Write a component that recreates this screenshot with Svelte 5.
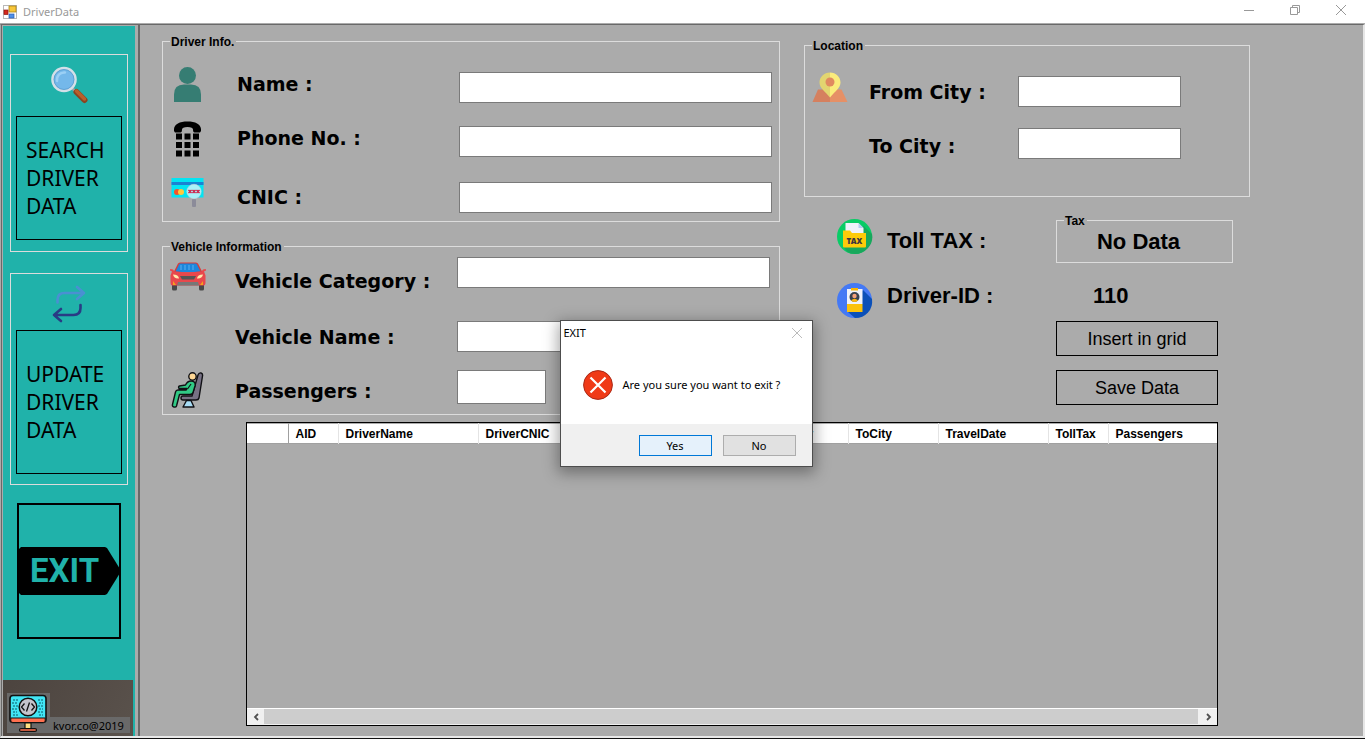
<script>
  const columns = [
    { title: '', width: 41 },
    { title: 'AID', width: 50 },
    { title: 'DriverName', width: 140 },
    { title: 'DriverCNIC', width: 275 },
    { title: 'FromCity', width: 95 },
    { title: 'ToCity', width: 90 },
    { title: 'TravelDate', width: 110 },
    { title: 'TollTax', width: 60 },
    { title: 'Passengers', width: 109 }
  ];
  const total = columns.reduce((sum, c) => sum + c.width, 0);
</script>

<div class="window">
  <header class="titlebar">
    <svg class="app-icon" viewBox="0 0 14 14" width="14" height="14" aria-hidden="true">
      <rect x=".5" y=".5" width="13" height="13" fill="#fff" stroke="#b9b9b9" />
      <rect x="6" y="1" width="7" height="6" fill="#f8c63a" stroke="#a88216" stroke-width=".8" />
      <rect x="1" y="5" width="4" height="4.5" fill="#d4281e" stroke="#8f1510" stroke-width=".7" />
      <rect x="6" y="9" width="5" height="4" fill="#4f8fe8" stroke="#2a5db0" stroke-width=".7" />
    </svg>
    <span class="title">DriverData</span>
    <div class="controls">
      <button aria-label="Minimize"><svg width="12" height="12" viewBox="0 0 12 12"><path d="M1 6.500h10" stroke="#999" fill="none" /></svg></button>
      <button aria-label="Restore"><svg width="12" height="12" viewBox="0 0 12 12"><path d="M1.500 3.500h7v7h-7zM3.500 3.500v-2h7v7h-2" stroke="#999" fill="none" /></svg></button>
      <button aria-label="Close"><svg width="12" height="12" viewBox="0 0 12 12"><path d="M1 1l10 10M11 1L1 11" stroke="#999" fill="none" /></svg></button>
    </div>
  </header>

  <div class="body">
    <nav class="sidebar">
      <section class="panel">
        <svg width="38" height="38" viewBox="0 0 38 38" aria-hidden="true">
          <path d="M22 22l5 5" stroke="#9aa5ad" stroke-width="2.500" />
          <path d="M26.500 26l8 8" stroke="#8a4420" stroke-width="6" stroke-linecap="round" />
          <path d="M26.500 25l8 8" stroke="#b8602c" stroke-width="3.500" stroke-linecap="round" />
          <circle cx="14" cy="13.500" r="11.500" fill="#74b8ea" stroke="#d3dfe8" stroke-width="2.600" />
          <circle cx="14" cy="13.500" r="10" fill="none" stroke="#4f93c8" stroke-width=".7" />
          <path d="M7 15c-.5-5 3-9 8-8.500" fill="none" stroke="#9bd0f5" stroke-width="2.500" stroke-linecap="round" />
        </svg>
        <button class="nav-button search">SEARCH DRIVER DATA</button>
      </section>

      <section class="panel update-panel">
        <svg width="34" height="38" viewBox="0 0 34 38" aria-hidden="true">
          <g fill="none" stroke-width="2.600" stroke-linecap="round" stroke-linejoin="round">
            <path d="M5.500 17.500V15q0-7 7-7H32M25 2l7 6-7 6" stroke="#4a90d2" />
            <path d="M28.500 20v3q0 7-7 7H2M9 24l-7 6 7 6" stroke="#293b85" />
          </g>
        </svg>
        <button class="nav-button update">UPDATE DRIVER DATA</button>
      </section>

      <button class="exit" aria-label="EXIT">
        <span class="sign">EXIT</span>
      </button>

      <footer class="brand">
        <div class="brand-icon">
          <svg width="39" height="39" viewBox="0 0 39 39" aria-hidden="true">
            <rect x="1" y="1.500" width="36" height="27" rx="3" fill="#41e5f5" stroke="#111" stroke-width="1.600" />
            <path d="M1.800 24h34.400v3q0 1.500-2 1.500H4q-2.200 0-2.200-1.500z" fill="#ff7050" stroke="#111" stroke-width="1" />
            <g stroke="#0b5966" stroke-width="1.200" stroke-dasharray="2 1">
              <path d="M4 6h5M3 9h5M4 12h5M3 15h6M4 18h4M4 21h5M29 6h5M30 9h4M29 12h5M30 15h4M29 18h5M30 21h4" />
            </g>
            <circle cx="19" cy="13" r="8.800" fill="#c4c4cc" stroke="#111" stroke-width="1.500" />
            <path d="M15.500 9.500L12.500 13l3 3.500M22.500 9.500l3 3.500-3 3.500M20.500 8.500l-3 9" fill="none" stroke="#111" stroke-width="1.300" />
            <path d="M16 29h6v6h-6z" fill="#ffe083" stroke="#111" stroke-width="1.200" />
            <rect x="10.500" y="34.500" width="17" height="3" rx="1.500" fill="#c65a40" stroke="#111" stroke-width="1.200" />
          </svg>
        </div>
        <span class="brand-name">kvor.co@2019</span>
      </footer>
    </nav>

    <main>
      <div class="forms">
        <div class="left">
          <fieldset class="group driver">
            <legend>Driver Info.</legend>
            <div class="icons">
              <svg width="34" height="36" viewBox="0 0 34 36" aria-hidden="true">
                <circle cx="17.500" cy="8.500" r="8.500" fill="#367d73" />
                <path d="M4 35V27.500q0-10 10-10h7q10 0 10 10V35z" fill="#367d73" />
              </svg>
              <svg width="34" height="36" viewBox="0 0 34 36" aria-hidden="true">
                <path d="M4 8C4.500 3 9.500 .5 17.500 .5S30.500 3 31 8v2l-1 1.500h-5.500q-1.500 0-1.500-3Q23 6 17.500 6T12 8.500q0 3-1.500 3H5L4 10z" />
                <path d="M6 12.500h6v6H6zM14.500 12.500h6v6h-6zM23 12.500h6v6h-6zM6 21h6v6H6zM14.500 21h6v6h-6zM23 21h6v6h-6zM6 29.500h6v6H6zM14.500 29.500h6v6h-6zM23 29.500h6v6h-6z" />
              </svg>
              <svg width="34" height="31" viewBox="0 0 34 31" aria-hidden="true">
                <rect x="1.500" y="1" width="32" height="19.500" fill="#04e4f2" />
                <rect x="1.500" y="5" width="32" height="3" fill="#1b82d2" />
                <circle cx="7" cy="15" r="3" fill="#f5532a" />
                <circle cx="11" cy="15" r="3" fill="#ffc93c" />
                <rect x="22" y="22" width="4" height="8" rx="1" fill="#8b8b99" />
                <circle cx="24" cy="14.500" r="7.200" fill="#a9f1f8" stroke="#c9d4dc" stroke-width=".6" />
                <path d="M18.500 13l3 3m0-3l-3 3m4-3l3 3m0-3l-3 3m4-3l3 3m0-3l-3 3" stroke="#d01840" stroke-width="1.400" />
              </svg>
            </div>
            <div class="labels">
              <label for="name">Name :</label>
              <label for="phone">Phone No. :</label>
              <label for="cnic">CNIC :</label>
            </div>
            <div class="inputs">
              <input id="name" type="text" />
              <input id="phone" type="text" />
              <input id="cnic" type="text" />
            </div>
          </fieldset>

          <fieldset class="group vehicle">
            <legend>Vehicle Information</legend>
            <div class="icons">
              <svg width="36" height="29" viewBox="0 0 36 29" aria-hidden="true">
                <path d="M2 20h5v7q0 1.500-1.500 1.500h-2Q2 28.500 2 27zM29 20h5v7q0 1.500-1.500 1.500h-2Q29 28.500 29 27z" fill="#484848" />
                <path d="M8 1.500q1-1 2.500-1h15q1.500 0 2.500 1l4.500 9h-29z" fill="#d83b3b" />
                <path d="M9 2.500q.5-1 1.500-1h15q1 0 1.500 1l3.500 7q-12.500 1.500-25 0z" fill="#1d87dc" />
                <path d="M11 3v5M15 3v5M19 3v5M23 3v5" stroke="#46a2ea" stroke-width="1.500" />
                <path d="M0 7.500q0-1 3 0l1.500 2q13.500 1.500 27 0l1.500-2q3-1 3 0v1l-2 1 1.500 4v7q0 3-2 3h-31q-2 0-2-3v-7l1.500-4-2-1z" fill="#e8484c" />
                <path d="M10 14h16l-2 3.500H12z" fill="#555" />
                <path d="M3 12.500q5.500 0 6 4-5 .500-6-4zM33 12.500q-5.500 0-6 4 5 .500 6-4z" fill="#ffe9ac" />
                <path d="M8 20h20l1 3.500H7z" fill="#777" />
                <path d="M3 19l3 4H3zM33 19l-3 4h3z" fill="#f5a21c" />
              </svg>
              <svg width="36" height="36" viewBox="0 0 36 36" aria-hidden="true">
                <g stroke="#101014" stroke-width="1.400" stroke-linejoin="round">
                  <path d="M28 3q1-2.500 3-2t1.500 3L29 26q-.5 2-3 2H13q-2 0-2-2t2-2h9z" fill="#777184" />
                  <path d="M16.500 28.500h4.500l3 6.500H13z" fill="#a9ddf5" />
                  <circle cx="22.500" cy="4.500" r="3.700" fill="#ffd896" />
                  <path d="M21 9q5 0 4 5l-2 6.500q-.5 2-3 2H9.500L6.500 34q-.5 1.500-2.500 1t-1.500-2.500L5.500 20Q6 18 8 18h8l1-1.500H9q-1-2 .5-2.500l6-1Q17.500 9 21 9z" fill="#31c985" />
                </g>
                <path d="M21 12l-3.500 5" stroke="#101014" stroke-width="1.200" />
              </svg>
            </div>
            <div class="labels">
              <label for="category">Vehicle Category :</label>
              <label for="vehicle">Vehicle Name :</label>
              <label for="passengers">Passengers :</label>
            </div>
            <div class="inputs">
              <input id="category" type="text" />
              <input id="vehicle" type="text" />
              <input id="passengers" class="short" type="text" />
            </div>
          </fieldset>
        </div>

        <div class="right">
          <fieldset class="group location">
            <legend>Location</legend>
            <div class="icons">
              <svg width="36" height="30" viewBox="0 0 36 30" aria-hidden="true">
                <path d="M6 17.500h12V30H.5z" fill="#d5805f" />
                <path d="M18 17.500h11.500L35.500 30H18z" fill="#e69066" />
                <path d="M18 .500C12 .500 7.500 5 7.500 10.500c0 6 6 9 10.500 15z" fill="#e2d570" />
                <path d="M18 .500c6 0 10.500 4.500 10.500 10 0 6-6 9-10.500 15z" fill="#fbec7c" />
                <circle cx="18" cy="10" r="4.500" fill="#e08a60" />
              </svg>
            </div>
            <div class="labels">
              <label for="from">From City :</label>
              <label for="to">To City :</label>
            </div>
            <div class="inputs">
              <input id="from" type="text" />
              <input id="to" type="text" />
            </div>
          </fieldset>

          <div class="summary">
            <div class="icons">
              <svg width="36" height="36" viewBox="0 0 36 36" aria-hidden="true">
                <circle cx="17.500" cy="17.500" r="17.500" fill="#08cc66" />
                <path d="M26.500 7L35 15q1.500 8-4 14t-13 6q-5 0-8-2.500L6.500 28z" fill="#18a85c" />
                <path d="M8.500 4h13l5 5v11h-18z" fill="#eef2fb" />
                <path d="M21.500 4l5 5h-5z" fill="#b4cdf2" />
                <path d="M6 11.500h7l2 2.500h14v13.500q0 1-1 1H7q-1 0-1-1z" fill="#fdcb0a" />
                <text x="17.500" y="24.500" text-anchor="middle" font-family="Noto Sans, sans-serif" font-size="8" font-weight="900" fill="#3c3540">TAX</text>
              </svg>
              <svg width="36" height="36" viewBox="0 0 36 36" aria-hidden="true">
                <circle cx="17.500" cy="17.500" r="17.500" fill="#4479f5" />
                <path d="M26 7l9 9q1 8-4 13.500T18 35L11 29z" fill="#0b50b8" />
                <path d="M10 6h15.500v15H10z" fill="#eef2fb" />
                <path d="M10 21h15.500v8H10z" fill="#fbc20a" />
                <path d="M14 5h7v2.500h-7z" fill="#f9b605" />
                <circle cx="17.500" cy="14" r="5" fill="#38414e" />
                <circle cx="17.500" cy="13" r="2.200" fill="#f3a17c" />
                <path d="M14 17.500q3.500-3.500 7 0-3.500 3-7 0z" fill="#fbb70c" />
              </svg>
            </div>
            <div class="captions">
              <span>Toll TAX :</span>
              <span>Driver-ID :</span>
            </div>
            <div class="actions">
              <fieldset class="group tax">
                <legend>Tax</legend>
                <output>No Data</output>
              </fieldset>
              <output class="driver-id">110</output>
              <button>Insert in grid</button>
              <button>Save Data</button>
            </div>
          </div>
        </div>
      </div>

      <div class="data-grid">
        <table>
          <colgroup>
            {#each columns as c}
              <col style="width: {(c.width / total) * 100}%" />
            {/each}
          </colgroup>
          <thead>
            <tr>
              {#each columns as c}
                <th scope="col">{c.title}</th>
              {/each}
            </tr>
          </thead>
          <tbody></tbody>
        </table>
        <div class="scrollbar">
          <button aria-label="Scroll left"><svg width="8" height="8" viewBox="0 0 8 8"><path d="M6 1L3 4l3 3" fill="none" stroke="#505050" stroke-width="1.800" /></svg></button>
          <div class="thumb"></div>
          <button aria-label="Scroll right"><svg width="8" height="8" viewBox="0 0 8 8"><path d="M3 1l3 3-3 3" fill="none" stroke="#505050" stroke-width="1.800" /></svg></button>
        </div>
      </div>
    </main>
  </div>

  <div class="dialog" role="alertdialog" aria-labelledby="dialog-title" aria-describedby="dialog-text">
    <div class="dialog-title">
      <span id="dialog-title">EXIT</span>
      <button aria-label="Close dialog"><svg width="12" height="12" viewBox="0 0 12 12"><path d="M1 1l10 10M11 1L1 11" stroke="#bbb" fill="none" /></svg></button>
    </div>
    <div class="dialog-message">
      <svg width="30" height="30" viewBox="0 0 30 30" aria-hidden="true">
        <circle cx="15" cy="15" r="14.400" fill="#f03a17" stroke="#a82a18" />
        <path d="M7.500 7.500l15 15M22.500 7.500l-15 15" stroke="#fff" stroke-width="2.200" />
      </svg>
      <span id="dialog-text">Are you sure you want to exit ?</span>
    </div>
    <div class="dialog-buttons">
      <button class="yes">Yes</button>
      <button>No</button>
    </div>
  </div>
</div>

<style>
  :global(body) {
    margin: 0;
    background: #ababab;
  }
  .window,
  .window :global(*) {
    box-sizing: border-box;
  }
  .window {
    position: relative;
    display: flex;
    flex-direction: column;
    min-height: 100vh;
    border-bottom: 1px solid #111;
    background: #ababab;
    color: #000;
    font-family: 'Noto Sans', sans-serif;
  }
  button {
    padding: 0;
    border: 0;
    background: none;
    color: #000;
    font-family: inherit;
  }
  svg {
    display: block;
  }
  fieldset {
    min-width: 0;
    margin: 0;
    padding: 0;
  }

  .titlebar {
    display: flex;
    align-items: center;
    height: 23px;
    padding-left: 3px;
    background: #fff;
  }
  .title {
    margin-left: 6px;
    color: #999;
    font-size: 11px;
    line-height: 16px;
  }
  .controls {
    display: flex;
    align-self: flex-start;
    margin: 0 1px 0 auto;
  }
  .controls button {
    display: grid;
    place-items: center;
    width: 46px;
    height: 20px;
  }

  .body {
    display: flex;
    flex: 1;
    margin-top: 1px;
    border-top: 1px solid #696969;
    border-right: 2px solid #e6e6e6;
    border-bottom: 2px solid #e9e9e9;
    border-left: 1px solid #ababab;
  }
  .sidebar {
    display: flex;
    flex-direction: column;
    flex: none;
    width: 137px;
    padding-right: 2px;
    border-left: 1px solid #696969;
    background: linear-gradient(#20b2aa, #20b2aa) 1px 1px / 132px 100% no-repeat;
  }
  .panel {
    display: flex;
    flex-direction: column;
    align-items: center;
    width: 118px;
    margin: 29px 0 0 8px;
    padding: 11px 5px;
    border: 1px solid #dcdcdc;
  }
  .update-panel {
    margin-top: 21px;
    padding-bottom: 10px;
  }
  .nav-button {
    width: 106px;
    margin-top: 12px;
    padding: 0 9px 1px;
    border: 1px solid #000;
    font-size: 21px;
    line-height: 28px;
    text-align: left;
  }
  .search {
    height: 124px;
  }
  .update {
    height: 144px;
    margin-top: 7px;
  }
  .exit {
    display: flex;
    align-items: center;
    width: 104px;
    height: 136px;
    margin: 18px 0 0 15px;
    border: 2px solid #000;
  }
  .sign {
    width: 101px;
    flex: none;
    height: 48px;
    padding-left: 11px;
    background: #000;
    clip-path: polygon(0 2px, 2px 0, 86px 0, 88px 1px, 101px 22px, 101px 26px, 88px 47px, 86px 48px, 2px 48px, 0 46px);
    color: #20b2aa;
    font-family: Roboto, sans-serif;
    font-size: 33px;
    font-weight: 700;
    line-height: 48px;
    text-align: left;
  }
  .brand {
    display: flex;
    align-items: flex-end;
    width: 130px;
    height: 56px;
    margin: auto 0 0 1px;
    padding: 0 3px 3px 4px;
    background: linear-gradient(120deg, #4c443f, #5a524c);
  }
  .brand-icon {
    width: 43px;
    padding: 1px 2px 0;
    background: #696969;
  }
  .brand-name {
    flex: 1;
    padding: 1px 0 0 3px;
    background: #696969;
    font-size: 11px;
    line-height: 15px;
    white-space: nowrap;
  }

  main {
    display: flex;
    flex: 1;
    flex-direction: column;
    min-width: 0;
    border-left: 2px solid #696969;
  }
  .forms {
    display: grid;
    grid-template-columns: minmax(0, 618fr) minmax(0, 446fr);
    gap: 24px;
    padding: 10px 113px 0 22px;
  }
  .group {
    border: 1px solid #dcdcdc;
  }
  legend {
    height: 13px;
    margin: 0;
    padding: 0 2px 0 1px;
    font-family: 'Liberation Sans', Arial, sans-serif;
    font-size: 12px;
    font-weight: 700;
    line-height: 14px;
    text-align: left;
  }
  .driver,
  .vehicle,
  .location {
    display: flex;
    align-items: flex-start;
  }
  .icons,
  .labels,
  .inputs {
    display: grid;
    align-items: start;
  }
  .icons,
  .labels {
    flex: none;
  }
  .icons {
    justify-items: center;
    width: 34px;
  }
  .labels {
    white-space: nowrap;
    font-family: 'DejaVu Sans', sans-serif;
    font-size: 19px;
    font-weight: 700;
    line-height: 24px;
  }
  .inputs {
    flex: 1;
  }
  input {
    width: 100%;
    height: 31px;
    padding: 0 6px;
    border: 1px solid #7a7a7a;
    border-radius: 0;
    background: #fff;
  }

  .driver {
    height: 187px;
    padding: 19px 7px 0 7px;
  }
  .driver .icons {
    grid-template-rows: 54px 56px auto;
  }
  .driver .labels {
    grid-template-rows: 54px 59px auto;
    width: 222px;
    margin: 5px 0 0 33px;
  }
  .driver .inputs {
    grid-template-rows: 54px 56px auto;
    margin-top: 5px;
  }

  .vehicle {
    height: 175px;
    margin-top: 18px;
    padding: 4px 9px 0 7px;
  }
  .vehicle .icons {
    grid-template-rows: 110px auto;
    margin-top: 5px;
  }
  .vehicle .labels {
    grid-template-rows: 56px 54px auto;
    width: 222px;
    margin: 12px 0 0 31px;
  }
  .vehicle .inputs {
    grid-template-rows: 64px 49px auto;
  }
  .vehicle .short {
    width: 89px;
    height: 34px;
  }

  .location {
    height: 158px;
    margin-top: 4px;
    padding: 20px 68px 0 7px;
  }
  .location .labels {
    grid-template-rows: 54px auto;
    width: 149px;
    margin: 8px 0 0 23px;
  }
  .location .inputs {
    grid-template-rows: 52px auto;
    margin-top: 4px;
  }

  .summary {
    display: flex;
    align-items: flex-start;
    padding: 17px 17px 0 33px;
  }
  .summary .icons {
    grid-template-rows: 64px auto;
    width: 36px;
    margin-top: 5px;
  }
  .captions {
    display: grid;
    flex: 1;
    gap: 31px;
    margin: 15px 0 0 14px;
    white-space: nowrap;
  }
  .captions,
  .actions output {
    font-family: 'Liberation Sans', Arial, sans-serif;
    font-size: 22px;
    font-weight: 700;
    line-height: 24px;
  }
  .actions {
    display: flex;
    flex-direction: column;
    width: 177px;
  }
  .tax {
    height: 49px;
    padding-left: 7px;
  }
  .tax output {
    display: block;
    margin: 3px 19px 0 0;
    text-align: center;
  }
  .actions .driver-id {
    margin: 21px 0 13px 37px;
  }
  .actions button {
    width: 162px;
    height: 35px;
    padding-top: 1px;
    border: 1px solid #000;
    font-family: 'Liberation Sans', Arial, sans-serif;
    font-size: 18px;
  }
  .actions button + button {
    margin-top: 14px;
  }

  .data-grid {
    display: flex;
    flex: 1;
    flex-direction: column;
    margin: 7px 145px 10px 106px;
    border: 1px solid #000;
  }
  table {
    width: 100%;
    table-layout: fixed;
    border-collapse: collapse;
    border-top: 1px solid #ababab;
    border-bottom: 1px solid #a0a0a0;
  }
  th {
    height: 20px;
    padding: 1px 0 0 7px;
    border-right: 1px solid #e4e4e4;
    background: #fff;
    font-family: 'Liberation Sans', Arial, sans-serif;
    font-size: 12px;
    font-weight: 700;
    line-height: 14px;
    text-align: left;
  }
  th:first-child {
    border-right-color: #a0a0a0;
  }
  th:last-child {
    border-right: 0;
  }
  .scrollbar {
    display: flex;
    height: 17px;
    margin-top: auto;
    border-top: 1px solid #fff;
    background: #f0f0f0;
  }
  .scrollbar button {
    display: grid;
    place-items: center;
    width: 17px;
  }
  .thumb {
    flex: 1;
    margin-bottom: 1px;
    background: #cdcdcd;
  }
  .scrollbar button:last-child {
    width: 19px;
  }

  .dialog {
    position: absolute;
    top: 320px;
    left: calc(50% - 123px);
    width: 253px;
    border: 1px solid #4d4d4d;
    background: #fff;
    box-shadow: 0 4px 14px 2px rgba(0, 0, 0, 0.35);
    font-size: 11px;
    line-height: 16px;
  }
  .dialog-title {
    display: flex;
    justify-content: space-between;
    align-items: center;
    height: 24px;
    padding: 0 9px 0 3px;
  }
  .dialog-message {
    display: flex;
    align-items: center;
    height: 79px;
    padding: 1px 0 0 22px;
    gap: 10px;
    white-space: nowrap;
  }
  .dialog-buttons {
    display: flex;
    justify-content: flex-end;
    gap: 11px;
    padding: 11px 16px 10px;
    background: #f0f0f0;
  }
  .dialog-buttons button {
    width: 73px;
    height: 21px;
    border: 1px solid #adadad;
    background: #e1e1e1;
    font-size: 11px;
  }
  .dialog-buttons .yes {
    border-color: #0078d7;
    background: #e5f1fb;
  }
</style>
